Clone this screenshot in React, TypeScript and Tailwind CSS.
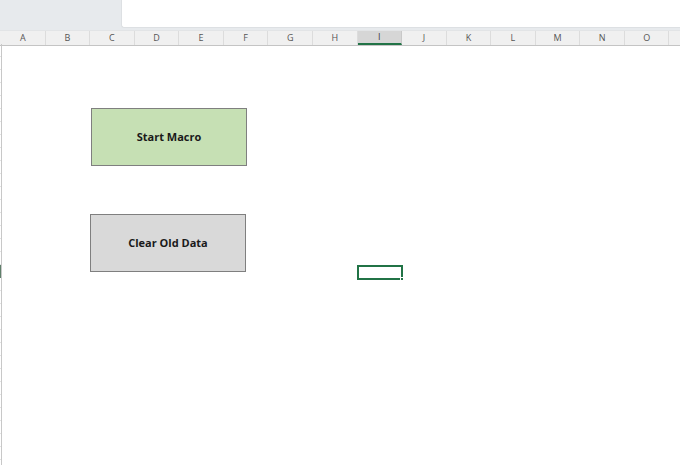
import React from "react"

const columns = ["A", "B", "C", "D", "E", "F", "G", "H", "I", "J", "K", "L", "M", "N", "O"]
const rows = Array.from({ length: 32 })

export default function App() {
  return (
    <div
      className="w-[680px] h-[465px] bg-white overflow-hidden flex flex-col"
      style={{ fontFamily: '"Open Sans", "Liberation Sans", sans-serif' }}
    >
      {/* top band */}
      <div className="h-[30px] bg-[#e7eaed] flex shrink-0">
        <div className="w-[121px]" />
        <div className="flex-1 h-[28px] bg-white rounded-bl-[3px] border-b border-l border-[#dde0e3]" />
      </div>

      {/* column headers */}
      <div className="h-[16px] flex shrink-0 bg-[#f0f0f0] border-t border-[#e2e4e6] border-b border-b-[#c4c4c4] pl-[1px]">
        {columns.map((c) => (
          <div
            key={c}
            className={
              c === "I"
                ? "w-[44.57px] shrink-0 flex items-center justify-center text-[9px] text-[#3b3b3b] bg-[#d6d6d6] border-r border-[#c8c8c8] border-b-2 border-b-[#217346]"
                : "w-[44.57px] shrink-0 flex items-center justify-center text-[9px] text-[#555] border-r border-[#dcdcdc]"
            }
          >
            {c}
          </div>
        ))}
      </div>

      {/* sheet */}
      <div className="relative flex-1 flex">
        <div className="w-[2px] border-r border-[#c8c8c8] flex flex-col -mt-[2px]">
          {rows.map((_, i) => (
            <div
              key={i}
              className={
                i === 17
                  ? "h-[13px] shrink-0 bg-[#5f7f6a]"
                  : "h-[13px] shrink-0 border-b border-[#e4e4e4]"
              }
            />
          ))}
        </div>
        <div className="flex-1" />

        {/* shapes */}
        <div className="absolute left-[91px] top-[62px] w-[156px] h-[58px] bg-[#c6e0b4] border border-[#7f7f7f] flex items-center justify-center text-[11px] font-bold text-[#1a1a1a]">
          Start Macro
        </div>
        <div className="absolute left-[90px] top-[168px] w-[156px] h-[58px] bg-[#d9d9d9] border border-[#7f7f7f] flex items-center justify-center text-[11px] font-bold text-[#1a1a1a]">
          Clear Old Data
        </div>

        {/* active cell */}
        <div className="absolute left-[357px] top-[219px] w-[46px] h-[15px] border-2 border-[#217346]">
          <div className="absolute -right-[3px] -bottom-[3px] w-[4px] h-[4px] bg-[#217346] border border-white" />
        </div>
      </div>
    </div>
  )
}
